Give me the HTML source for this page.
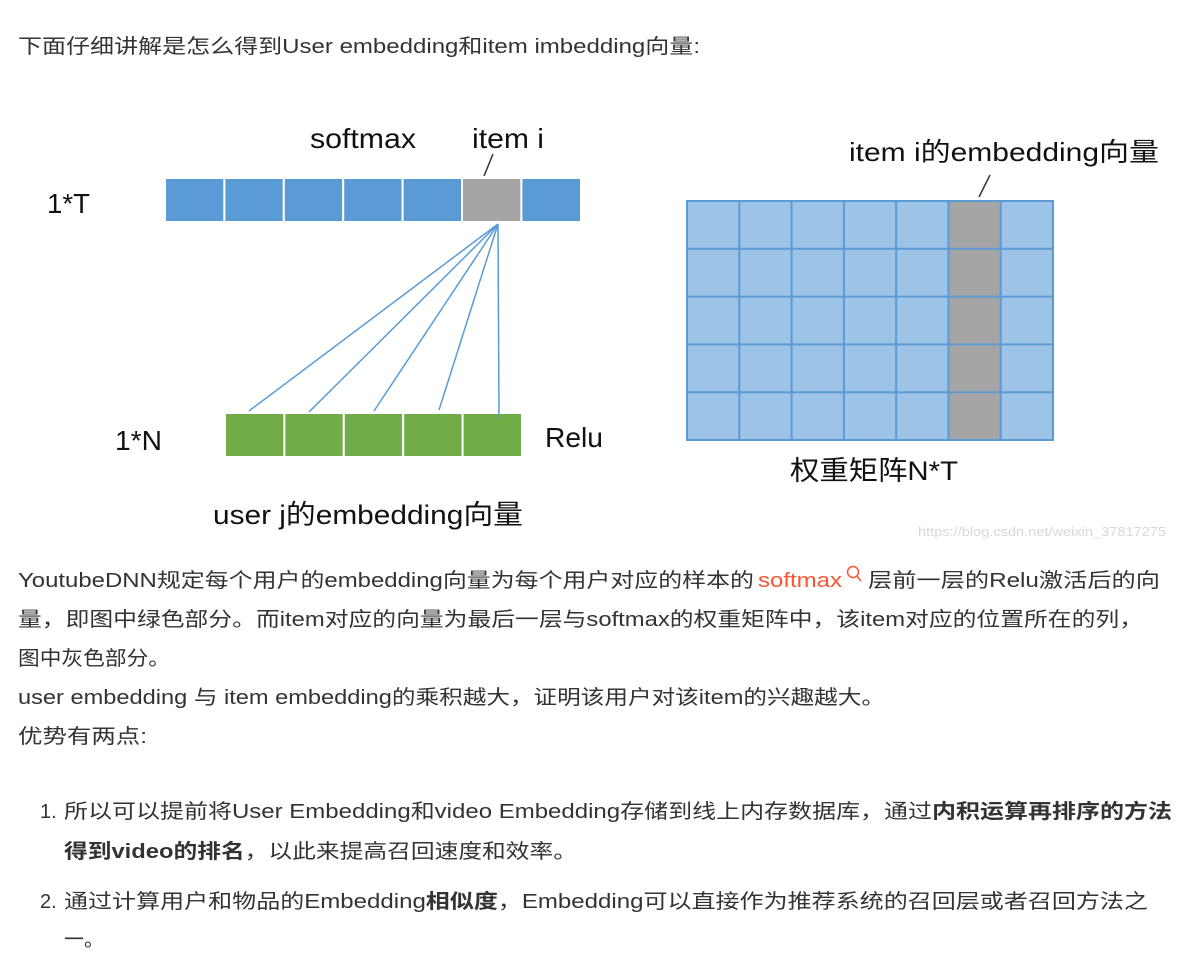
<!DOCTYPE html>
<html><head><meta charset="utf-8"><style>
html,body{margin:0;padding:0;background:#fff;width:1200px;height:957px;overflow:hidden}
svg{display:block}
text{font-family:"Liberation Sans","Noto Sans CJK SC",sans-serif}
.t{font-size:20px;fill:#333}
.d{font-size:28px;fill:#111}
</style></head><body>
<svg width="1200" height="957" viewBox="0 0 1200 957" xmlns="http://www.w3.org/2000/svg">
<text class="t" x="18" y="53" textLength="682" lengthAdjust="spacingAndGlyphs">下面仔细讲解是怎么得到User embedding和item imbedding向量:</text>

<g stroke="#fff" stroke-width="2">
<rect x="165" y="178" width="59.4" height="44" fill="#5b9bd5"/>
<rect x="224.4" y="178" width="59.4" height="44" fill="#5b9bd5"/>
<rect x="283.8" y="178" width="59.4" height="44" fill="#5b9bd5"/>
<rect x="343.2" y="178" width="59.4" height="44" fill="#5b9bd5"/>
<rect x="402.6" y="178" width="59.4" height="44" fill="#5b9bd5"/>
<rect x="462" y="178" width="59.4" height="44" fill="#a5a5a5"/>
<rect x="521.4" y="178" width="59.6" height="44" fill="#5b9bd5"/>
</g>
<g stroke="#fff" stroke-width="2">
<rect x="225" y="413" width="59.4" height="44" fill="#70ad47"/>
<rect x="284.4" y="413" width="59.4" height="44" fill="#70ad47"/>
<rect x="343.8" y="413" width="59.4" height="44" fill="#70ad47"/>
<rect x="403.2" y="413" width="59.4" height="44" fill="#70ad47"/>
<rect x="462.6" y="413" width="59.4" height="44" fill="#70ad47"/>
</g>
<g stroke="#5b9bd5" stroke-width="1.5" fill="none">
<line x1="498" y1="224" x2="249" y2="411"/>
<line x1="498" y1="224" x2="309" y2="412"/>
<line x1="498" y1="224" x2="374" y2="411"/>
<line x1="498" y1="224" x2="439" y2="410"/>
<line x1="498" y1="224" x2="499" y2="418"/>
</g>
<line x1="493" y1="154" x2="484" y2="176" stroke="#333" stroke-width="1.5"/>
<text class="d" x="310" y="148" textLength="106" lengthAdjust="spacingAndGlyphs">softmax</text>
<text class="d" x="472" y="148" textLength="72" lengthAdjust="spacingAndGlyphs">item i</text>
<text class="d" x="47" y="213" textLength="43" lengthAdjust="spacingAndGlyphs">1*T</text>
<text class="d" x="115" y="450" textLength="47" lengthAdjust="spacingAndGlyphs">1*N</text>
<text class="d" x="545" y="447" textLength="58" lengthAdjust="spacingAndGlyphs">Relu</text>
<text class="d" x="213" y="524" style="font-size:27px" textLength="310" lengthAdjust="spacingAndGlyphs">user j的embedding向量</text>

<rect x="687" y="201" width="366" height="239" fill="#9dc3e6"/>
<rect x="948" y="201" width="52" height="239" fill="#a5a5a5"/>
<g stroke="#5b9bd5" stroke-width="2" fill="none">
<rect x="687" y="201" width="366" height="239"/>
<line x1="739.3" y1="201" x2="739.3" y2="440"/>
<line x1="791.6" y1="201" x2="791.6" y2="440"/>
<line x1="843.9" y1="201" x2="843.9" y2="440"/>
<line x1="896.1" y1="201" x2="896.1" y2="440"/>
<line x1="948.4" y1="201" x2="948.4" y2="440"/>
<line x1="1000.7" y1="201" x2="1000.7" y2="440"/>
<line x1="687" y1="248.8" x2="1053" y2="248.8"/>
<line x1="687" y1="296.6" x2="1053" y2="296.6"/>
<line x1="687" y1="344.4" x2="1053" y2="344.4"/>
<line x1="687" y1="392.2" x2="1053" y2="392.2"/>
</g>
<line x1="990" y1="175" x2="979" y2="197" stroke="#333" stroke-width="1.5"/>
<text class="d" x="849" y="161" style="font-size:26px" textLength="310" lengthAdjust="spacingAndGlyphs">item i的embedding向量</text>
<text class="d" x="790" y="480" style="font-size:27px" textLength="168" lengthAdjust="spacingAndGlyphs">权重矩阵N*T</text>
<text x="918" y="536" style="font-size:13px;fill:#d8d8d8" textLength="248" lengthAdjust="spacingAndGlyphs">https://blog.csdn.net/weixin_37817275</text>

<text class="t" x="18" y="587" textLength="736" lengthAdjust="spacingAndGlyphs">YoutubeDNN规定每个用户的embedding向量为每个用户对应的样本的</text>
<text class="t" x="758" y="587" style="fill:#fc5531" textLength="84" lengthAdjust="spacingAndGlyphs">softmax</text>
<g stroke="#fc5531" stroke-width="1.5" fill="none"><circle cx="853" cy="572" r="5.5"/><line x1="857" y1="576" x2="861" y2="581"/></g>
<text class="t" x="868" y="587" textLength="292" lengthAdjust="spacingAndGlyphs">层前一层的Relu激活后的向</text>
<text class="t" x="18" y="626" textLength="1125" lengthAdjust="spacingAndGlyphs">量，即图中绿色部分。而item对应的向量为最后一层与softmax的权重矩阵中，该item对应的位置所在的列，</text>
<text class="t" x="18" y="665" textLength="152" lengthAdjust="spacingAndGlyphs">图中灰色部分。</text>
<text class="t" x="18" y="704" textLength="867" lengthAdjust="spacingAndGlyphs">user embedding 与 item embedding的乘积越大，证明该用户对该item的兴趣越大。</text>
<text class="t" x="18" y="743" textLength="129" lengthAdjust="spacingAndGlyphs">优势有两点:</text>

<text class="t" x="40" y="818">1.</text>
<text class="t" x="64" y="818" textLength="1108" lengthAdjust="spacingAndGlyphs">所以可以提前将User Embedding和video Embedding存储到线上内存数据库，通过<tspan font-weight="bold">内积运算再排序的方法</tspan></text>
<text class="t" x="64" y="858" textLength="513" lengthAdjust="spacingAndGlyphs"><tspan font-weight="bold">得到video的排名</tspan>，以此来提高召回速度和效率。</text>
<text class="t" x="40" y="908">2.</text>
<text class="t" x="64" y="908" textLength="1084" lengthAdjust="spacingAndGlyphs">通过计算用户和物品的Embedding<tspan font-weight="bold">相似度</tspan>，Embedding可以直接作为推荐系统的召回层或者召回方法之</text>
<text class="t" x="64" y="946">一。</text>
</svg>
</body></html>
